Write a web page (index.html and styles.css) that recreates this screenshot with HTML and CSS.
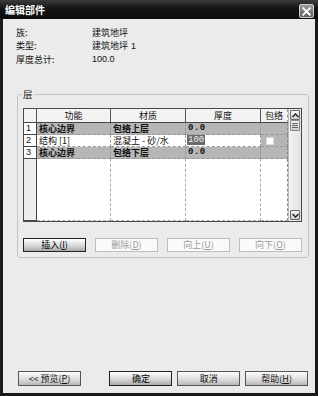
FILE: index.html
```html
<!DOCTYPE html>
<html>
<head>
<meta charset="utf-8">
<link rel="stylesheet" href="styles.css">
</head>
<body>
<div class="window">
  <div class="titlebar">
    <span class="title">编辑部件</span>
    <span class="close"><svg width="14" height="13" viewBox="0 0 14 13"><path d="M3.5 3 L10.5 10 M10.5 3 L3.5 10" stroke="#fff" stroke-width="2" stroke-linecap="square"/></svg></span>
  </div>
  <div class="client">
    <div class="info">
      <div class="r1">族:</div><div class="r1">建筑地坪</div>
      <div class="r2">类型:</div><div class="r2">建筑地坪 <span class="num">1</span></div>
      <div class="r3">厚度总计:</div><div class="r3 num">100.0</div>
    </div>
    <fieldset class="group">
      <legend>层</legend>
      <div class="gridwrap">
        <div class="grid">
          <div class="h hn"></div>
          <div class="h">功能</div>
          <div class="h">材质</div>
          <div class="h">厚度</div>
          <div class="h hl">包络</div>

          <div class="n">1</div>
          <div class="c g b">核心边界</div>
          <div class="c g b">包络上层</div>
          <div class="c g b mono">0.0</div>
          <div class="c g cl"></div>

          <div class="n">2</div>
          <div class="c">结构 [1]</div>
          <div class="c">混凝土 - 砂/水</div>
          <div class="c edit"><span class="sel mono">100</span></div>
          <div class="c g cl"><span class="chk"></span></div>

          <div class="n">3</div>
          <div class="c g b">核心边界</div>
          <div class="c g b">包络下层</div>
          <div class="c g b mono">0.0</div>
          <div class="c g cl"></div>

          <div class="n fill"></div>
          <div class="e"></div>
          <div class="e"></div>
          <div class="e"></div>
          <div class="e cl"></div>
        </div>
        <div class="scroll">
          <div class="sbtn"><svg width="7" height="5" viewBox="0 0 7 5"><path d="M0.5 4 L3.5 1 L6.5 4" fill="none" stroke="#222" stroke-width="1.4"/></svg></div>
          <div class="thumb"><svg width="6" height="5" viewBox="0 0 6 5"><path d="M0 0.5H6M0 2.5H6M0 4.5H6" stroke="#666" stroke-width="1"/></svg></div>
          <div class="track"></div>
          <div class="sbtn"><svg width="7" height="5" viewBox="0 0 7 5"><path d="M0.5 1 L3.5 4 L6.5 1" fill="none" stroke="#222" stroke-width="1.4"/></svg></div>
        </div>
      </div>
      <div class="btnrow">
        <div class="btn def">插入(<u>I</u>)</div>
        <div class="btn dis">删除(<u>D</u>)</div>
        <div class="btn dis">向上(<u>U</u>)</div>
        <div class="btn dis">向下(<u>O</u>)</div>
      </div>
    </fieldset>
    <div class="footer">
      <div class="btn raised">&lt;&lt; 预览(<u>P</u>)</div>
      <div class="spacer"></div>
      <div class="btn def">确定</div>
      <div class="btn raised">取消</div>
      <div class="btn raised">帮助(<u>H</u>)</div>
    </div>
  </div>
</div>
</body>
</html>
```
FILE: styles.css
```css
html, body {
  margin: 0;
  padding: 0;
  background: #1b1b1b;
}
body {
  font-family: "Noto Sans CJK SC", "Noto Sans", sans-serif;
  font-size: 9px;
  color: #111;
}
.window {
  width: 318px;
  height: 396px;
  display: flex;
  flex-direction: column;
  background: #1a1a1a;
}
.titlebar {
  height: 19px;
  display: flex;
  align-items: center;
  justify-content: space-between;
  padding: 0 4px 0 5px;
  background: linear-gradient(#3c3c3c, #141414 45%, #0c0c0c);
  flex: none;
}
.title {
  color: #fff;
  font-weight: bold;
  font-size: 10px;
  line-height: 14px;
  margin-top: 1px;
}
.close {
  margin-top: 3px;
  border: 1px solid #cfcfcf;
  border-radius: 2px;
  background: linear-gradient(#9a9a9a, #606060);
  display: flex;
  align-items: center;
  justify-content: center;
  box-sizing: border-box;
  width: 15px;
  height: 14px;
}
.client {
  flex: 1;
  margin: 0 3px 3px 3px;
  background: #ebebeb;
  display: flex;
  flex-direction: column;
}
.info {
  display: grid;
  grid-template-columns: 76px 1fr;
  grid-template-rows: 13px 13px 15px;
  padding: 7px 0 0 13px;
  line-height: 13px;
}
.info .r3 { line-height: 15px; }
.num { font-family: "Liberation Sans", sans-serif; font-size: 9px; }
.info .r2 .num { margin-left: 1px; }
.group {
  margin: 21px 6px 0 14px;
  padding: 8px 6px 5px 5px;
  border: 1px solid #c4c4c4;
  border-radius: 3px;
  min-width: 0;
}
.group legend {
  padding: 0 1px;
  margin-left: -1px;
  line-height: 12px;
  font-size: 9.5px;
  color: #222;
}
.gridwrap {
  display: flex;
  height: 114px;
  box-sizing: border-box;
  border: 1px solid #4a4a4a;
  background: #fff;
}
.grid {
  width: 264px;
  display: grid;
  grid-template-columns: 13px 74px 75px 75px 27px;
  grid-template-rows: 14px 12px 12px 12px 1fr;
}
.h {
  background: #f3f3f3;
  border-right: 1px solid #555;
  border-bottom: 1px solid #444;
  text-align: center;
  line-height: 13px;
  box-sizing: border-box;
  overflow: hidden;
}
.h.hl { border-right: 1px dashed #999; }
.n {
  background: #fff;
  border-right: 1px solid #444;
  border-bottom: 1px solid #444;
  box-sizing: border-box;
  padding-left: 2px;
  line-height: 11px;
  font-family: "Liberation Sans", sans-serif;
  font-size: 9px;
  overflow: hidden;
}
.n.fill { background: #ececec; }
.c {
  border-right: 1px dashed #999;
  border-bottom: 1px dashed #999;
  box-sizing: border-box;
  padding-left: 2px;
  line-height: 11px;
  height: 12px;
  white-space: nowrap;
  overflow: hidden;
}
.e {
  border-right: 1px dashed #aaa;
  border-bottom: 1px dashed #aaa;
  box-sizing: border-box;
}
.cl { border-right: 1px dashed #888; }
.g { background: #b6b6b6; }
.b { font-weight: bold; }
.mono { font-family: "Liberation Mono", monospace; font-size: 9px; letter-spacing: 0.5px; }
.edit { background: #fff; padding-left: 1px; }
.sel {
  background: #6a6a6a;
  color: #eee;
  letter-spacing: 0;
  padding: 0 1px;
  display: inline-block;
  line-height: 10px;
  vertical-align: top;
}
.chk {
  display: block;
  width: 8px;
  height: 8px;
  margin: 2px 0 0 3px;
  background: #fff;
  border: 1px solid #d8d8d8;
  box-sizing: border-box;
}
.scroll {
  flex: 1;
  display: flex;
  flex-direction: column;
  border-left: 1px solid #bbb;
  background: linear-gradient(90deg, #f4f4f4, #e2e2e2);
  padding: 1px;
}
.sbtn, .thumb {
  height: 10px;
  border: 1px solid #666;
  border-radius: 1px;
  background: linear-gradient(#f6f6f6, #cdcdcd);
  display: flex;
  align-items: center;
  justify-content: center;
  box-sizing: border-box;
}
.thumb { height: 11px; border-color: #888; }
.track { flex: 1; }
.btnrow {
  display: grid;
  grid-template-columns: repeat(4, 1fr);
  gap: 9px;
  margin-top: 16px;
}
.btn {
  height: 14px;
  box-sizing: border-box;
  text-align: center;
  line-height: 12px;
  font-size: 9px;
  overflow: hidden;
}
.btn u { text-decoration: underline; }
.def {
  border: 1px solid #222;
  background: linear-gradient(#ffffff, #d4d4d4 60%, #a8a8a8);
  color: #000;
}
.dis {
  border: 1px solid #bdbdbd;
  background: #fafafa;
  color: #9a9a9a;
}
.raised {
  border: 1px solid #555;
  background: linear-gradient(#fdfdfd, #dadada 60%, #b8b8b8);
}
.footer {
  margin-top: auto;
  display: flex;
  gap: 5px;
  padding: 0 7px 7px 15px;
}
.footer .btn { width: 64px; height: 15px; line-height: 13px; }
.footer .spacer { width: 19px; }
```
